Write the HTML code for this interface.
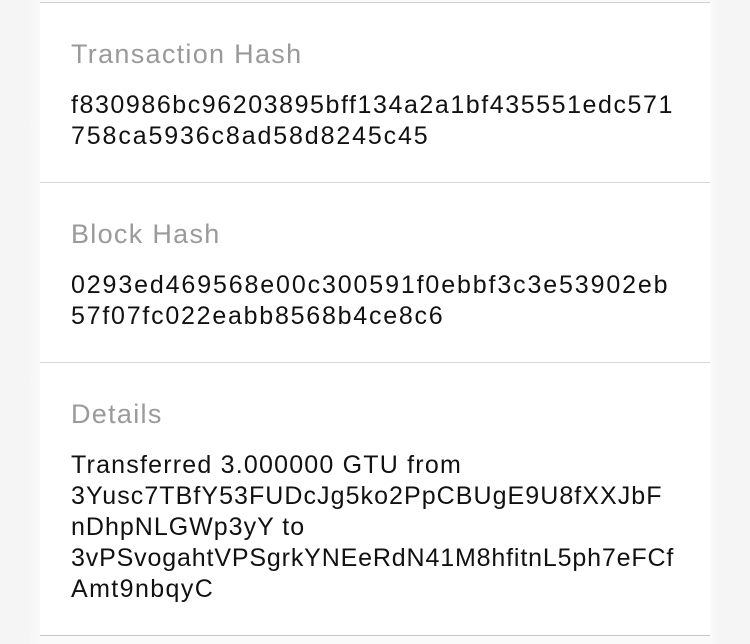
<!DOCTYPE html>
<html><head><style>
html,body{margin:0;padding:0;}
body{width:750px;height:644px;background:#f5f5f5;position:relative;overflow:hidden;font-family:"Liberation Sans",sans-serif;}
.shadow{position:absolute;left:28px;top:0;width:694px;height:644px;background:linear-gradient(90deg,#f5f5f5,#fafafa 12px,#fafafa calc(100% - 12px),#f5f5f5);}
.card{position:absolute;left:40px;top:2px;width:670px;height:632px;background:#fff;border-top:1px solid #d0d0d0;border-bottom:1px solid #c8c8c8;}
.sec{position:absolute;left:0;width:670px;border-bottom:1px solid #d6d6d6;}
.lab{position:absolute;left:31px;font-size:27px;letter-spacing:1.3px;color:#9a9a9a;}
.val{position:absolute;left:31px;font-size:25px;color:#111;line-height:31px;white-space:nowrap;}
.val div{height:31px;}
</style></head><body>
<div class="shadow"></div>
<div class="card">
<div class="sec" style="top:0;height:179px"></div>
<div class="sec" style="top:180px;height:179px"></div>
<div class="lab" style="top:36px">Transaction Hash</div>
<div class="val" style="top:87px"><div style="letter-spacing:1.56px">f830986bc96203895bff134a2a1bf435551edc571</div><div style="letter-spacing:1.87px">758ca5936c8ad58d8245c45</div></div>
<div class="lab" style="top:216px">Block Hash</div>
<div class="val" style="top:267px"><div style="letter-spacing:1.87px">0293ed469568e00c300591f0ebbf3c3e53902eb</div><div style="letter-spacing:1.76px">57f07fc022eabb8568b4ce8c6</div></div>
<div class="lab" style="top:396px">Details</div>
<div class="val" style="top:447px"><div style="letter-spacing:1.2px">Transferred 3.000000 GTU from</div><div style="letter-spacing:1.05px">3Yusc7TBfY53FUDcJg5ko2PpCBUgE9U8fXXJbF</div><div style="letter-spacing:1px">nDhpNLGWp3yY to</div><div style="letter-spacing:0.85px">3vPSvogahtVPSgrkYNEeRdN41M8hfitnL5ph7eFCf</div><div style="letter-spacing:1.4px">Amt9nbqyC</div></div>
</div>
</body></html>
